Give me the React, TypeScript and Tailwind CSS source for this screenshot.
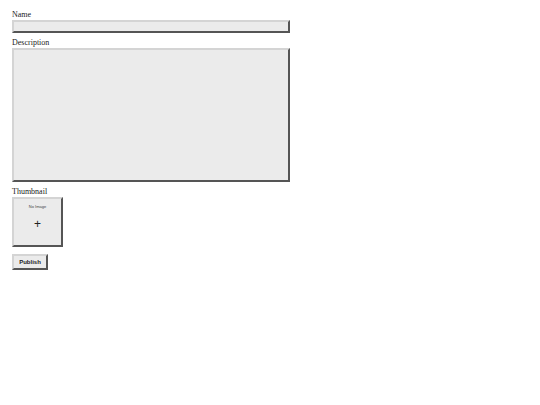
import React from "react";

export default function App() {
  return (
    <div className="w-[540px] h-[405px] bg-white px-3 pt-[10px] font-['Liberation_Serif',serif] text-[8px] text-[#222]">
      <div className="flex flex-col w-[278px]">
        {/* Name */}
        <label className="leading-[9px] mb-[1px]">Name</label>
        <input
          type="text"
          className="h-[13px] w-full bg-[#ebebeb] border-2 border-t-[#d4d4d4] border-l-[#d4d4d4] border-b-[#555] border-r-[#555] outline-none"
        />

        {/* Description */}
        <label className="leading-[9px] mt-[5px] mb-[1px]">Description</label>
        <textarea className="h-[134px] w-full resize-none bg-[#ebebeb] border-2 border-t-[#d4d4d4] border-l-[#d4d4d4] border-b-[#555] border-r-[#555] outline-none" />

        {/* Thumbnail */}
        <label className="leading-[9px] mt-[5px] mb-[1px]">Thumbnail</label>
        <div className="w-[51px] h-[50px] flex flex-col items-center bg-[#ebebeb] border-2 border-t-[#d4d4d4] border-l-[#d4d4d4] border-b-[#555] border-r-[#555] font-['Liberation_Sans',sans-serif]">
          <span className="mt-[5px] text-[4px] leading-[5px] text-[#444]">No Image</span>
          <span className="mt-[9px] text-[12px] leading-[12px] text-[#222]">+</span>
        </div>

        {/* Publish */}
        <button className="mt-[7px] w-[36px] h-[16px] flex items-center justify-center bg-[#ebebeb] border-2 border-t-[#d4d4d4] border-l-[#d4d4d4] border-b-[#555] border-r-[#555] font-['Liberation_Sans',sans-serif] font-bold text-[6px] text-[#222]">
          Publish
        </button>
      </div>
    </div>
  );
}
